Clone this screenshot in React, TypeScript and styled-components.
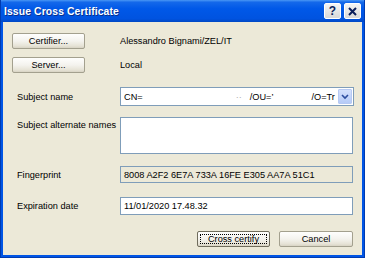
import React from "react";
import styled, { createGlobalStyle } from "styled-components";

const GlobalStyle = createGlobalStyle`
  html, body {
    margin: 0;
    padding: 0;
    background: #ffffff;
  }
  * {
    box-sizing: border-box;
  }
`;

const Window = styled.div`
  width: 365px;
  height: 258px;
  display: flex;
  flex-direction: column;
  background: #0055e5;
  border-left: 1px solid #003bb0;
  border-right: 1px solid #003bb0;
  border-bottom: 1px solid #003bb0;
  font-family: "Liberation Sans", Arial, sans-serif;
  font-size: 9.2px;
  color: #000;
`;

const TitleBar = styled.div`
  height: 22px;
  flex: none;
  display: flex;
  align-items: center;
  padding: 0 3px 0 3px;
  background: linear-gradient(
    to bottom,
    #4a97f5 0%,
    #1468ea 10%,
    #0058e8 40%,
    #0053e0 85%,
    #0048c4 100%
  );
`;

const Title = styled.div`
  flex: 1;
  color: #fff;
  font-weight: bold;
  font-size: 10.4px;
  letter-spacing: 0.1px;
  text-shadow: 1px 1px 0 #0a2f8a;
`;

const CaptionButton = styled.div`
  width: 17px;
  height: 16px;
  margin-left: 3px;
  border: 1px solid #ffffff;
  border-radius: 2px;
  background: linear-gradient(to bottom, #f4f4f4, #d9d9d9);
  display: flex;
  align-items: center;
  justify-content: center;
  color: #0b1f5c;
  font-weight: bold;
  font-size: 12px;
`;

const Client = styled.div`
  flex: 1;
  margin: 0 2px 2px 2px;
  background: #ece9d8;
  padding: 11px 9px 0 9px;
  display: flex;
  flex-direction: column;
`;

const Row = styled.div<{ $top: number; $h: number }>`
  display: grid;
  grid-template-columns: 108px 1fr;
  align-items: center;
  margin-top: ${(p) => p.$top}px;
  height: ${(p) => p.$h}px;
`;

const TopRow = styled(Row)`
  align-items: start;
`;

const Label = styled.div<{ $top?: number }>`
  padding-left: 5px;
  padding-top: ${(p) => p.$top ?? 0}px;
  white-space: nowrap;
`;

const Value = styled.div`
  padding-left: 0;
`;

const PushButton = styled.button<{ $w: number; $focus?: boolean }>`
  width: ${(p) => p.$w}px;
  height: 16px;
  padding: 0;
  margin: 0;
  font-family: inherit;
  font-size: 9.2px;
  color: #000;
  border: 1px solid ${(p) => (p.$focus ? "#6f6c5c" : "#a3a08e")};
  border-radius: 2px;
  background: linear-gradient(to bottom, #fefefd 0%, #f4f3ee 50%, #e6e3d6 85%, #d8d3c4 100%);
  position: relative;
  display: flex;
  align-items: center;
  justify-content: center;

  &::after {
    content: "";
    display: ${(p) => (p.$focus ? "block" : "none")};
    position: absolute;
    inset: 2px;
    border: 1px dotted #000;
  }
`;

const Field = styled.div<{ $h: number; $readonly?: boolean }>`
  height: ${(p) => p.$h}px;
  border: 1px solid #7f9db9;
  background: ${(p) => (p.$readonly ? "#ece9d8" : "#fff")};
  display: flex;
  align-items: center;
  padding-left: 3px;
  white-space: nowrap;
  overflow: hidden;
`;

const ComboField = styled(Field)`
  padding-right: 1px;
  margin-right: -1px;
`;

const ComboText = styled.div`
  flex: 1;
  display: flex;
  overflow: hidden;
`;

const Gap = styled.span<{ $w: number }>`
  display: inline-block;
  width: ${(p) => p.$w}px;
`;

const Faint = styled.span`
  color: #b0b0b0;
`;

const ComboArrow = styled.div`
  width: 14px;
  height: 15px;
  flex: none;
  border: 1px solid #b6c9f3;
  border-radius: 1px;
  background: linear-gradient(to bottom, #d3e0fd, #b6cbf7);
  display: flex;
  align-items: center;
  justify-content: center;
`;

const TextArea = styled(Field)`
  align-items: flex-start;
`;

const ButtonBar = styled.div`
  display: flex;
  justify-content: flex-end;
  gap: 9px;
  margin-top: 16px;
`;

export default function App() {
  return (
    <>
      <GlobalStyle />
      <Window>
        <TitleBar>
          <Title>Issue Cross Certificate</Title>
          <CaptionButton>?</CaptionButton>
          <CaptionButton>
            <svg width="9" height="9" viewBox="0 0 9 9">
              <path d="M1 1 L8 8 M8 1 L1 8" stroke="#0b1f5c" strokeWidth="2" />
            </svg>
          </CaptionButton>
        </TitleBar>
        <Client>
          <Row $top={0} $h={16}>
            <PushButton $w={73}>Certifier...</PushButton>
            <Value>Alessandro Bignami/ZEL/IT</Value>
          </Row>
          <Row $top={8} $h={16}>
            <PushButton $w={73}>Server...</PushButton>
            <Value>Local</Value>
          </Row>
          <Row $top={14} $h={19}>
            <Label>Subject name</Label>
            <ComboField $h={19}>
              <ComboText>
                CN=
                <Gap $w={93} />
                <Faint>··</Faint>
                <Gap $w={8} />
                /OU=&#8217;
                <Gap $w={38} />
                /O=Tr
              </ComboText>
              <ComboArrow>
                <svg width="8" height="6" viewBox="0 0 8 6">
                  <path d="M1 1 L4 4 L7 1" stroke="#2c4d9e" strokeWidth="1.6" fill="none" />
                </svg>
              </ComboArrow>
            </ComboField>
          </Row>
          <TopRow $top={11} $h={37}>
            <Label $top={3}>Subject alternate names</Label>
            <TextArea $h={37} />
          </TopRow>
          <Row $top={12} $h={17}>
            <Label>Fingerprint</Label>
            <Field $h={17} $readonly>
              8008 A2F2 6E7A 733A 16FE E305 AA7A 51C1
            </Field>
          </Row>
          <Row $top={14} $h={18}>
            <Label>Expiration date</Label>
            <Field $h={18}>11/01/2020 17.48.32</Field>
          </Row>
          <ButtonBar>
            <PushButton $w={73} $focus>
              Cross certify
            </PushButton>
            <PushButton $w={74}>Cancel</PushButton>
          </ButtonBar>
        </Client>
      </Window>
    </>
  );
}
